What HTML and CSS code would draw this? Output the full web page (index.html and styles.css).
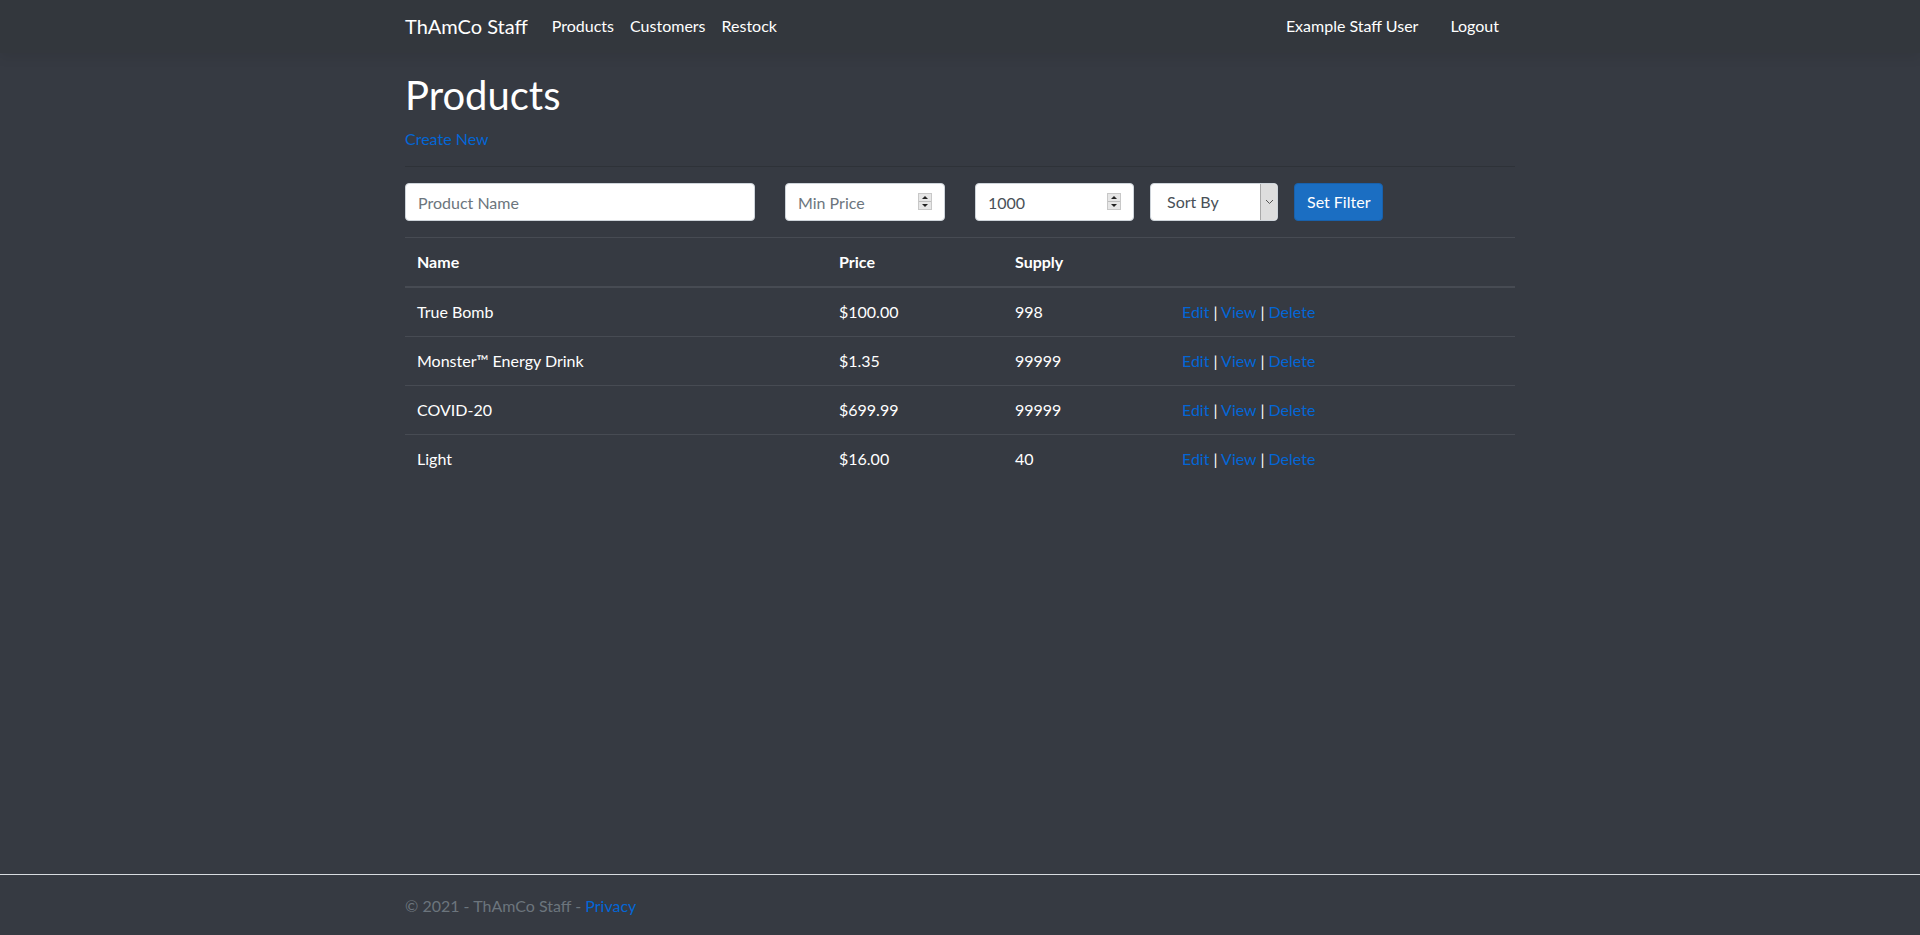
FILE: index.html
```html
<!DOCTYPE html>
<html lang="en">
<head>
<meta charset="utf-8">
<title>Products - ThAmCo Staff</title>
<link rel="stylesheet" href="styles.css">
</head>
<body>
<header class="navbar">
  <div class="container nav-inner">
    <a class="brand" href="#">ThAmCo Staff</a>
    <ul class="nav-links">
      <li><a class="nav-link" href="#">Products</a></li>
      <li><a class="nav-link" href="#">Customers</a></li>
      <li><a class="nav-link" href="#">Restock</a></li>
    </ul>
    <ul class="nav-right">
      <li><a class="nav-link wide" href="#">Example Staff User</a></li>
      <li><a class="nav-link wide" href="#">Logout</a></li>
    </ul>
  </div>
</header>

<main class="container main">
  <h1 class="title">Products</h1>
  <p class="create"><a href="#">Create New</a></p>
  <hr class="sep">
  <form class="filter">
    <input class="field f-name" type="text" placeholder="Product Name">
    <div class="num f-min">
      <input class="field" type="text" placeholder="Min Price">
      <span class="spin"><span class="up"></span><span class="down"></span></span>
    </div>
    <div class="num f-max">
      <input class="field" type="text" value="1000">
      <span class="spin"><span class="up"></span><span class="down"></span></span>
    </div>
    <div class="sel f-sort">
      <select class="field select"><option>Sort By</option></select>
      <span class="drop"><svg width="9" height="6" viewBox="0 0 9 6"><path d="M1 1l3.5 3.5L8 1" fill="none" stroke="#555" stroke-width="1"/></svg></span>
    </div>
    <button class="btn" type="button">Set Filter</button>
  </form>
  <table class="table">
    <thead>
      <tr><th class="c-name">Name</th><th class="c-price">Price</th><th class="c-supply">Supply</th><th></th></tr>
    </thead>
    <tbody>
      <tr><td>True Bomb</td><td>$100.00</td><td>998</td><td><a href="#">Edit</a> | <a href="#">View</a> | <a href="#">Delete</a></td></tr>
      <tr><td>Monster™ Energy Drink</td><td>$1.35</td><td>99999</td><td><a href="#">Edit</a> | <a href="#">View</a> | <a href="#">Delete</a></td></tr>
      <tr><td>COVID-20</td><td>$699.99</td><td>99999</td><td><a href="#">Edit</a> | <a href="#">View</a> | <a href="#">Delete</a></td></tr>
      <tr><td>Light</td><td>$16.00</td><td>40</td><td><a href="#">Edit</a> | <a href="#">View</a> | <a href="#">Delete</a></td></tr>
    </tbody>
  </table>
</main>

<footer class="footer">
  <div class="container">© 2021 - ThAmCo Staff - <a href="#">Privacy</a></div>
</footer>
</body>
</html>
```
FILE: styles.css
```css
* { box-sizing: border-box; }
html, body { height: 100%; }
body {
  margin: 0;
  background: #363a42;
  color: #fff;
  font-family: "Segoe UI", Lato, "Noto Sans", sans-serif;
  font-size: 16px;
  line-height: 1.5;
  display: flex;
  flex-direction: column;
}
a { color: #0366d6; text-decoration: none; }
.container { width: 1140px; margin: 0 auto; padding: 0 15px; }

.navbar {
  height: 53px;
  background: #33373d;
  box-shadow: 0 4px 12px rgba(0,0,0,.08);
  flex: none;
}
.nav-inner { display: flex; align-items: center; height: 100%; padding-bottom: 1px; }
.brand { color: #fff; font-size: 20px; line-height: 30px; margin-right: 16px; }
.nav-links, .nav-right { list-style: none; margin: 0; padding: 0; display: flex; }
.nav-right { margin-left: auto; }
.nav-link { display: block; color: #fff; padding: 8px; }
.nav-link.wide { padding: 8px 16px; }

.main { flex: 1; padding-top: 18px; }
.title { font-size: 40px; font-weight: 400; line-height: 1.2; margin: 0 0 8px; }
.create { margin: 0; }
.sep { border: 0; border-top: 1px solid #2e3238; margin: 15px 0 0; }

.filter { display: flex; align-items: center; margin: 16px 0; }
.field {
  height: 38px;
  border: 1px solid #ced4da;
  border-radius: 4px;
  background: #fff;
  color: #495057;
  font: inherit;
  padding: 6px 12px;
  outline: none;
}
.field::placeholder { color: #6c757d; }
.f-name { width: 350px; margin-right: 30px; flex: none; }
.num { position: relative; flex: none; }
.num .field { width: 100%; }
.f-min { width: 160px; margin-right: 30px; }
.f-max { width: 159px; margin-right: 16px; }
.spin {
  position: absolute;
  right: 13px;
  top: 10px;
  width: 14px;
  height: 17px;
  display: flex;
  flex-direction: column;
  border: 1px solid #c8c8c8;
  background: #e6e6e6;
}
.spin span { flex: 1; position: relative; }
.spin .up { border-bottom: 1px solid #bdbdbd; }
.spin .up::after, .spin .down::after {
  content: "";
  position: absolute;
  left: 3px;
  border-left: 3px solid transparent;
  border-right: 3px solid transparent;
}
.spin .up::after { top: 2px; border-bottom: 3px solid #222; }
.spin .down::after { top: 2px; border-top: 3px solid #222; }

.sel { position: relative; width: 128px; margin-right: 16px; flex: none; }
.select { width: 100%; appearance: none; -webkit-appearance: none; padding-left: 16px; }
.drop {
  position: absolute;
  right: 1px;
  top: 1px;
  bottom: 1px;
  width: 17px;
  background: #dedede;
  border-left: 1px solid #a9a9a9;
  border-radius: 0 3px 3px 0;
  display: flex;
  align-items: center;
  justify-content: center;
}
.btn {
  height: 38px;
  padding: 6px 12px;
  font: inherit;
  color: #fff;
  background: #1b6ec2;
  border: 1px solid #1861ac;
  border-radius: 4px;
  flex: none;
}

.table {
  width: 1110px;
  border-collapse: collapse;
  color: #fff;
}
.table th, .table td {
  padding: 12px;
  text-align: left;
  vertical-align: top;
  border-top: 1px solid #474b53;
}
.table thead th { border-bottom: 2px solid #474b53; font-weight: 700; }
.c-name { width: 422px; }
.c-price { width: 176px; }
.c-supply { width: 167px; }

.footer {
  flex: none;
  border-top: 1px solid #d8dbe0;
  padding-top: 2px;
  line-height: 58px;
  color: #6c757d;
  white-space: nowrap;
}
```
